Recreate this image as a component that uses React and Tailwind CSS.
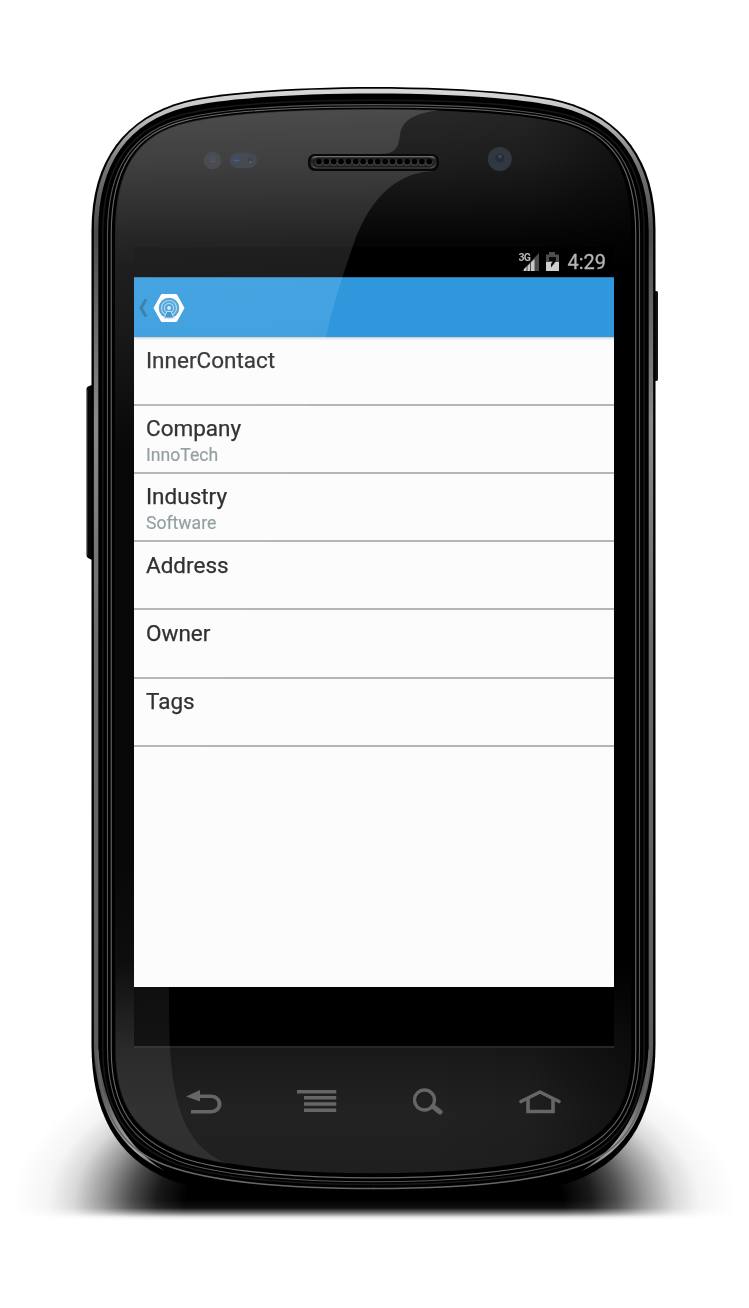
const OUTER = {
  l: 91.5, t: 87, b: 1200,
  top: [[300, 87], [220, 92], [185, 101], [125, 117], [91.5, 160], [91.5, 230]],
  bot: [[91.5, 1045], [91.5, 1110], [115, 1158], [170, 1180], [215, 1196], [300, 1200], [373.5, 1200]],
};
const GLASS = {
  t: 109,
  top: [[300, 109], [232, 112], [188, 122], [135, 134], [115, 170], [115, 235]],
  bot: [[115, 1050], [115, 1105], [135, 1135], [185, 1154], [230, 1169], [310, 1174], [373.5, 1174]],
};

// Contour of the handset, interpolated between the outer shell (0) and the glass (1).
function ring(kx, kt, kb) {
  const mix = (a, b, ky) => a.map((p, i) => [p[0] + (b[i][0] - p[0]) * kx, p[1] + (b[i][1] - p[1]) * ky]);
  const t = OUTER.t + (GLASS.t - OUTER.t) * kt;
  const top = mix(OUTER.top, GLASS.top, kt);
  const bot = mix(OUTER.bot, GLASS.bot, kb);
  const f = (p) => `${p[0].toFixed(2)} ${p[1].toFixed(2)}`;
  const m = (p) => f([747 - p[0], p[1]]);
  return [
    `M373.5 ${t}`,
    `C${f(top[0])} ${f(top[1])} ${f(top[2])}`,
    `C${f(top[3])} ${f(top[4])} ${f(top[5])}`,
    `L${f(bot[0])}`,
    `C${f(bot[1])} ${f(bot[2])} ${f(bot[3])}`,
    `C${f(bot[4])} ${f(bot[5])} ${f(bot[6])}`,
    `C${m(bot[5])} ${m(bot[4])} ${m(bot[3])}`,
    `C${m(bot[2])} ${m(bot[1])} ${m(bot[0])}`,
    `L${m(top[5])}`,
    `C${m(top[4])} ${m(top[3])} ${m(top[2])}`,
    `C${m(top[1])} ${m(top[0])} 373.5 ${t}Z`,
  ].join(" ");
}

const glassPath = ring(1, 1, 1);

function BottomRim() {
  return (
    <>
      <path d="M94 1040C95 1112 120 1150 165 1171C134 1151 102 1118 97.500 1040Z" fill="url(#sliver)" />
      <path d="M97.500 1050C100 1125 130 1152 165 1165C210 1182 290 1188.500 374 1188.500" fill="none" stroke="#666" strokeWidth="1.600" />
    </>
  );
}

function Handset() {
  return (
    <svg className="absolute inset-0" width="749" height="1308" viewBox="0 0 749 1308" aria-hidden="true">
      <defs>
        <linearGradient id="rim" gradientUnits="userSpaceOnUse" x1="0" y1="87" x2="0" y2="1200">
          <stop offset="0" stopColor="#dcdcdc" />
          <stop offset="0.03" stopColor="#b8b8b8" />
          <stop offset="0.07" stopColor="#777" />
          <stop offset="0.13" stopColor="#4a4a4a" />
          <stop offset="0.3" stopColor="#8a8a8a" />
          <stop offset="0.5" stopColor="#6a6a6a" />
          <stop offset="0.86" stopColor="#5c5c5c" />
          <stop offset="0.89" stopColor="#5c5c5c" stopOpacity="0" />
        </linearGradient>
        <linearGradient id="sliver" gradientUnits="userSpaceOnUse" x1="0" y1="1040" x2="0" y2="1172">
          <stop offset="0" stopColor="#5c5c5c" />
          <stop offset="0.4" stopColor="#555" />
          <stop offset="0.65" stopColor="#8c8c8c" />
          <stop offset="0.85" stopColor="#a8a8a8" />
          <stop offset="1" stopColor="#555" />
        </linearGradient>
        <linearGradient id="glass" gradientUnits="userSpaceOnUse" x1="0" y1="109" x2="0" y2="1174">
          <stop offset="0" stopColor="#282828" />
          <stop offset="0.05" stopColor="#1e1e1e" />
          <stop offset="0.12" stopColor="#060606" />
          <stop offset="0.15" stopColor="#000" />
          <stop offset="0.8" stopColor="#000" />
          <stop offset="0.88" stopColor="#181818" />
          <stop offset="0.94" stopColor="#222" />
          <stop offset="1" stopColor="#1f1f1f" />
        </linearGradient>
        <linearGradient id="edge" x1="0" y1="0" x2="1" y2="0">
          <stop offset="0.6" stopColor="#000" stopOpacity="0" />
          <stop offset="0.8" stopColor="#000" stopOpacity="0.08" />
          <stop offset="1" stopColor="#000" stopOpacity="0.5" />
        </linearGradient>
        <radialGradient id="floor" gradientUnits="userSpaceOnUse" cx="0" cy="0" r="1" gradientTransform="translate(374 1205) scale(362 180)">
          <stop offset="0" stopColor="#000" />
          <stop offset="0.52" stopColor="#000" />
          <stop offset="0.6" stopColor="#000" stopOpacity="0.9" />
          <stop offset="0.67" stopColor="#000" stopOpacity="0.7" />
          <stop offset="0.75" stopColor="#000" stopOpacity="0.4" />
          <stop offset="0.83" stopColor="#000" stopOpacity="0.15" />
          <stop offset="0.9" stopColor="#000" stopOpacity="0.04" />
          <stop offset="1" stopColor="#000" stopOpacity="0" />
        </radialGradient>
        <linearGradient id="fade" gradientUnits="userSpaceOnUse" x1="0" y1="1200" x2="0" y2="1220">
          <stop offset="0" stopColor="#fff" />
          <stop offset="0.4" stopColor="#eee" />
          <stop offset="0.65" stopColor="#888" />
          <stop offset="0.85" stopColor="#1c1c1c" />
          <stop offset="1" stopColor="#000" />
        </linearGradient>
        <mask id="shadowMask" maskUnits="userSpaceOnUse" x="0" y="1000" width="749" height="230">
          <rect x="0" y="1000" width="749" height="230" fill="url(#fade)" />
        </mask>
        <linearGradient id="grille" x1="0" y1="0" x2="0" y2="1">
          <stop offset="0" stopColor="#777" />
          <stop offset="0.3" stopColor="#222" />
          <stop offset="0.75" stopColor="#333" />
          <stop offset="1" stopColor="#555" />
        </linearGradient>
      </defs>

      <rect x="0" y="1010" width="749" height="212" fill="url(#floor)" mask="url(#shadowMask)" />

      <path d="M93 384.500L88 386.500Q86.500 387 86.500 389V555Q86.500 557 88 558L93 560.500Z" fill="#060606" />
      <path d="M87.500 390V555" stroke="#333" strokeWidth="0.800" />
      <path d="M654 291H656.500Q658 291 658 293V379Q658 381 656.500 381H654Z" fill="#111" />

      <path d={ring(0, 0, 0)} fill="#000" />
      <path d={`${ring(0.1, 0.08, 0.2)} ${ring(0.29, 0.3, 0.4)}`} fillRule="evenodd" fill="url(#rim)" />
      <BottomRim />
      <g transform="matrix(-1 0 0 1 747 0)">
        <BottomRim />
      </g>
      <path d={ring(0.48, 0.6, 0.6)} fill="none" stroke="#171717" strokeWidth="1.500" />
      <path d={ring(0.68, 0.8, 0.7)} fill="none" stroke="#555" strokeWidth="1.100" />
      <path d={ring(0.84, 0.91, 0.85)} fill="none" stroke="#686868" strokeWidth="1.100" />
      <path d={glassPath} fill="url(#glass)" stroke="#000" strokeWidth="1.500" />
      <path d={glassPath} fill="url(#edge)" />

      <path d="M134 247.500H614" stroke="#fff" strokeOpacity="0.060" />
      <circle cx="499.800" cy="159" r="12" fill="#313842" />
      <circle cx="499.800" cy="158" r="4.500" fill="#252d38" />
      <circle cx="500" cy="156.500" r="2" fill="#3d4653" />
    </svg>
  );
}

function Gloss() {
  return (
    <svg className="pointer-events-none absolute inset-0" width="749" height="1308" viewBox="0 0 749 1308" aria-hidden="true">
      <defs>
        <linearGradient id="gloss" gradientUnits="userSpaceOnUse" x1="180" y1="109" x2="240" y2="1174">
          <stop offset="0" stopColor="#fff" stopOpacity="0.165" />
          <stop offset="0.1" stopColor="#fff" stopOpacity="0.135" />
          <stop offset="0.2" stopColor="#fff" stopOpacity="0.1" />
          <stop offset="0.32" stopColor="#fff" stopOpacity="0.030" />
          <stop offset="0.7" stopColor="#fff" stopOpacity="0.030" />
          <stop offset="0.88" stopColor="#fff" stopOpacity="0.075" />
          <stop offset="1" stopColor="#fff" stopOpacity="0.070" />
        </linearGradient>
        <clipPath id="glassClip"><path d={glassPath} /></clipPath>
      </defs>
      <path
        clipPath="url(#glassClip)"
        fill="url(#gloss)"
        d="M100 100H450V109.500C419 111 402 118 400 135C398 150 394 153.500 380 154V171H436C385 172 365 215 355 240C344 272 333 303 326 338C275 560 169 760 169 1000C169 1085 175 1150 236 1166V1180H100Z"
      />
      <g>
        <circle cx="212.500" cy="160.500" r="8.800" fill="#4b4c52" />
        <circle cx="212.500" cy="159" r="3.500" fill="#4a5060" />
        <path d="M209.500 161.500H215.500" stroke="#545a69" />
        <rect x="229.500" y="152.500" width="27.500" height="15.500" rx="7.750" fill="#484a51" />
        <ellipse cx="236.500" cy="159.500" rx="4.800" ry="4.200" fill="#434c62" />
        <path d="M233.500 160.500H239.500" stroke="#525e78" />
        <circle cx="250" cy="160" r="2.500" fill="#40434c" />
        <path d="M249.500 162H251.500" stroke="#888" />
      </g>
      <rect x="308" y="154" width="131" height="17" rx="6.500" fill="#080808" />
      <rect x="310.500" y="156" width="126" height="12.500" rx="5" fill="url(#grille)" />
      <rect x="313.500" y="158" width="120" height="9" rx="4.500" fill="#252525" stroke="#161616" />
      {Array.from({ length: 16 }, (_, i) => (
        <g key={i}>
          <circle cx={319 + i * 7.35} cy="162.300" r="3.500" fill="#444" />
          <circle cx={319 + i * 7.35} cy="161.600" r="2.900" fill="#000" />
        </g>
      ))}
    </svg>
  );
}

function StatusBar() {
  return (
    <div className="flex h-[30px] items-center justify-end bg-black pr-[8px] font-[Roboto,sans-serif] text-[#b4b4b4]">
      <svg width="42" height="22" viewBox="0 0 42 22" aria-hidden="true">
        <path d="M3 20L20 2V20Z" fill="#4a4e4b" />
        <path d="M5 20V18L7.500 15.500V20ZM8.500 20V15L11 12.500V20ZM12 20V11.500L15.500 8V20Z" fill="#c9c9c9" />
        <text x="-0.500" y="10" fontSize="10.500" fontWeight="700" letterSpacing="-0.800" stroke="#000" strokeWidth="1.500" paintOrder="stroke" fill="#b5b5b5">3G</text>
        <path d="M30 1H36V3.500H40V20H27V3.500H30Z" fill="#4a504b" />
        <path d="M27 11H40V20H27Z" fill="#cfcfcf" />
        <path d="M30 6H37V10L34 14L32 16.500V13L34 10H30Z" fill="#0a0a0a" />
      </svg>
      <span className="ml-[6px] text-[20px] leading-[30px] [-webkit-text-stroke:0.300px_#b4b4b4]">4:29</span>
    </div>
  );
}

function ActionBar() {
  return (
    <header className="flex h-[60px] items-center border-t border-[#2377ae] bg-[#2f98dd]">
      <svg className="ml-[4px]" width="10" height="20" viewBox="0 0 10 20" fill="none" aria-hidden="true">
        <path d="M8 1.500L3 10L8 18.500" stroke="#27729f" strokeWidth="3" />
      </svg>
      <svg className="ml-[4px]" width="34" height="30" viewBox="0 0 34 30" fill="none" aria-hidden="true">
        <path d="M9.500 1.500H24.500L32 15L24.500 28.500H9.500L2 15Z" fill="#fff" stroke="#fff" strokeLinejoin="round" />
        <circle cx="17" cy="15" r="10.300" fill="#3c9bda" />
        <circle cx="17" cy="15" r="7.500" stroke="#a6d2f0" strokeWidth="1.200" />
        <circle cx="17" cy="15" r="4.600" stroke="#a6d2f0" strokeWidth="1.200" />
        <path d="M12 25L15 18.500H19L22 25Z" fill="#3289c6" stroke="#b9dcf3" />
        <circle cx="17" cy="15" r="1.900" fill="#d5eaf8" />
      </svg>
    </header>
  );
}

const fields = [
  { title: "InnerContact" },
  { title: "Company", value: "InnoTech" },
  { title: "Industry", value: "Software" },
  { title: "Address" },
  { title: "Owner" },
  { title: "Tags" },
];

function FieldRow({ title, value }) {
  return (
    <li className="h-[68.25px] border-b-2 border-[#b5b5b5] px-[12px] pt-[8.5px]">
      <div className="text-[22.500px] leading-[28px] text-[#2b2b2b] [-webkit-text-stroke:0.250px_#2b2b2b]">{title}</div>
      {value && <div className="mt-[3px] text-[17.600px] leading-[20px] text-[#919d9f] [-webkit-text-stroke:0.200px_#919d9f]">{value}</div>}
    </li>
  );
}

function NavKeys() {
  return (
    <nav className="ml-[184px] mt-[39px] flex h-[28px] w-[377px] items-center justify-between text-[#666]">
      <svg width="38" height="28" viewBox="0 0 38 28" fill="none" aria-hidden="true">
        <path d="M2 9.500L16 3V7.500H26.500C33.500 7.500 37.500 12 37.500 17S33.500 26.500 26.500 26.500H7V23H26C31 23 33.500 20.500 33.500 17S31 11 26 11H16V14.500Z" fill="currentColor" />
      </svg>
      <svg className="-translate-x-[1.5px]" width="40" height="28" viewBox="0 0 40 28" aria-hidden="true">
        <path d="M0.500 3H40V6.500H0.500ZM7.500 9H40V12.500H7.500ZM7.500 15.200H40V18.700H7.500ZM7.500 21.400H40V25H7.500Z" fill="currentColor" />
      </svg>
      <svg width="30" height="28" viewBox="0 0 30 28" fill="none" stroke="currentColor" aria-hidden="true">
        <circle cx="11.500" cy="13" r="10" strokeWidth="3.300" />
        <path d="M20 19.500L27 25" strokeWidth="5" strokeLinecap="round" />
      </svg>
      <svg width="42" height="28" viewBox="0 0 42 28" fill="none" stroke="currentColor" strokeLinejoin="round" aria-hidden="true">
        <path d="M2 14.500L21 5L40 14.500" strokeWidth="3.600" strokeLinecap="round" />
        <path d="M9 12V24.500H34V12" strokeWidth="3.600" strokeLinejoin="miter" />
      </svg>
    </nav>
  );
}

export default function App() {
  return (
    <div className="relative h-[1308px] w-[749px] overflow-hidden bg-white">
      <Handset />
      <div className="relative pt-[247px]">
        <main className="ml-[134px] flex h-[740px] w-[480px] flex-col font-[Roboto,sans-serif] blur-[0.5px]">
          <StatusBar />
          <ActionBar />
          <ul className="flex-1 bg-[#fcfcfc] pt-[0.4px] shadow-[inset_0_3px_3px_-2px_#bbb]">
            {fields.map((f) => (
              <FieldRow key={f.title} title={f.title} value={f.value} />
            ))}
          </ul>
        </main>
        <div className="ml-[134px] h-[61px] w-[480px] border-b-2 border-[#262626] bg-black" />
        <NavKeys />
      </div>
      <Gloss />
    </div>
  );
}
